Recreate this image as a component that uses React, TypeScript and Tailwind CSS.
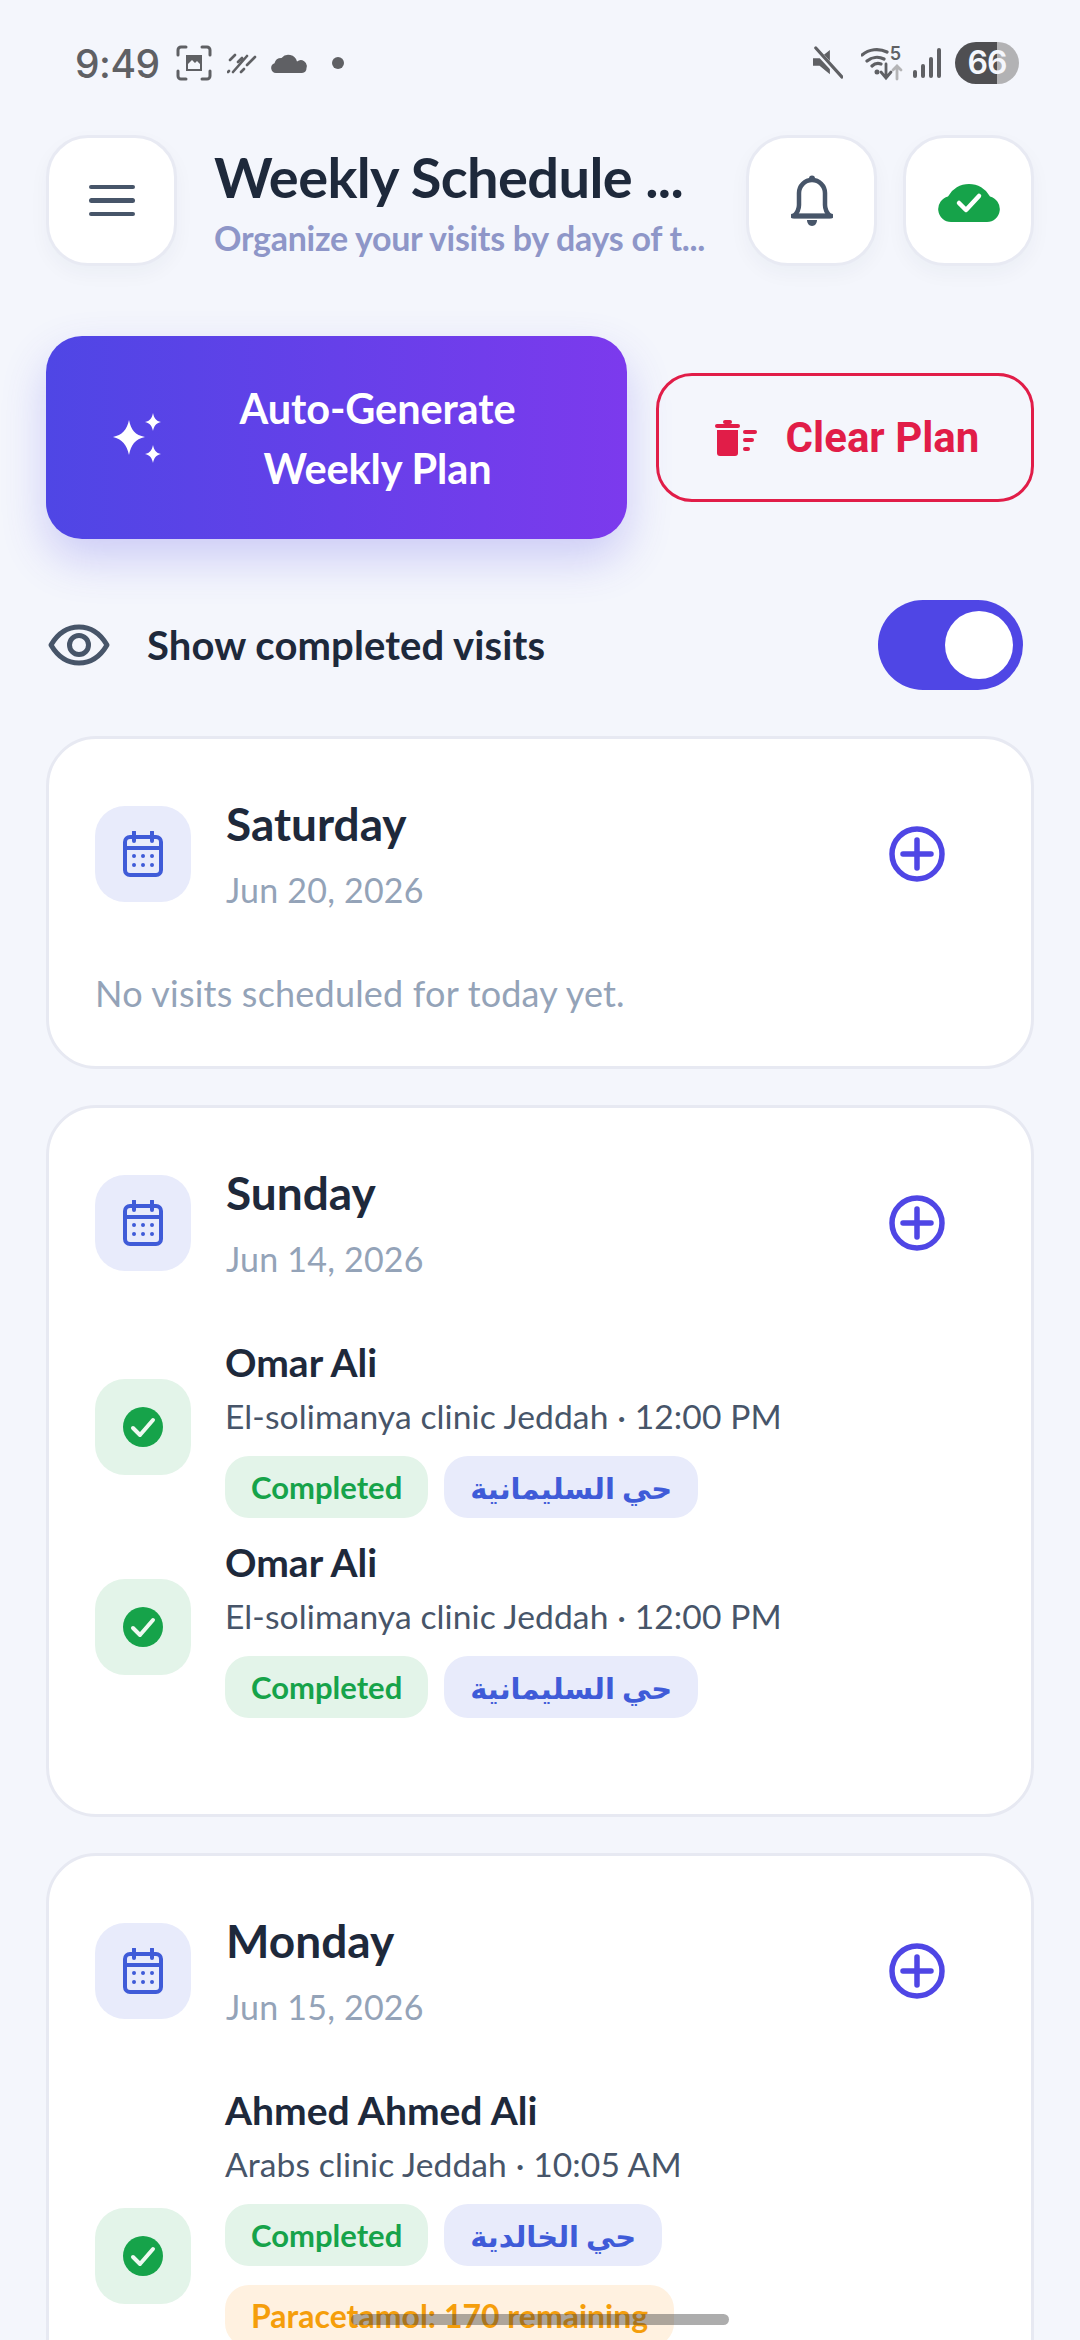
const BODY = "font-['Lato','DejaVu_Sans',sans-serif]"

function StatusBar() {
  return (
    <div className="flex h-[135px] items-start justify-between pl-[75px] pr-[61px] pt-[40px] text-[#5f6064]">
      <div className="flex h-[46px] items-center">
        <span className="font-['Inter',sans-serif] text-[39px] font-medium leading-none tracking-[-0.5px]">9:49</span>
        {/* screenshot */}
        <svg className="ml-[16px]" width="36" height="36" viewBox="0 0 36 36" fill="none" stroke="currentColor" strokeWidth="3" strokeLinecap="round">
          <path d="M2 10V5a3 3 0 0 1 3-3h5M26 2h5a3 3 0 0 1 3 3v5M34 26v5a3 3 0 0 1-3 3h-5M10 34H5a3 3 0 0 1-3-3v-5" />
          <path d="M10 10h16v16H10z" fill="currentColor" stroke="none" />
          <path d="M12 19l4-4 3 3 2-2 3 3v5H12z" fill="#f4f6fc" stroke="none" />
        </svg>
        {/* data lines */}
        <svg className="ml-[15px]" width="30" height="22" viewBox="0 0 30 22" fill="none" stroke="currentColor" strokeWidth="2.6" strokeLinecap="round">
          <path d="M3 8l5-5M1 20l1-1M6 20L20 4M14 20l3-3M20 13l8-8M11 10l4-4" />
        </svg>
        {/* cloud */}
        <svg className="ml-[14px]" width="36" height="20" viewBox="0 0 36 20" fill="currentColor">
          <path d="M5 20a5 5 0 0 1-1.500-9.700A7 7 0 0 1 10.500 5 9 9 0 0 1 26 8.500 6 6 0 0 1 35.500 15a5 5 0 0 1-4.500 5z" />
        </svg>
        <span className="ml-[25px] h-[12px] w-[12px] rounded-full bg-[#5f6064]" />
      </div>
      <div className="flex h-[46px] items-center">
        {/* muted */}
        <svg width="30" height="34" viewBox="0 0 32 34" fill="currentColor">
          <path d="M0 12h7l11-9v26l-11-9H0z" />
          <path d="M2 2l28 30" stroke="#f4f6fc" strokeWidth="6" />
          <path d="M3 1l28 31" stroke="currentColor" strokeWidth="3.4" strokeLinecap="round" />
        </svg>
        {/* wifi */}
        <svg className="ml-[18px]" width="44" height="36" viewBox="0 0 44 36" fill="none" stroke="currentColor" strokeWidth="3.200" strokeLinecap="round">
          <path d="M1 10a23 23 0 0 1 25-3M6 16a16 16 0 0 1 17-2M11 21a9 9 0 0 1 9-2" />
          <circle cx="16" cy="27" r="2.500" fill="currentColor" stroke="none" />
          <path d="M25 19v13M20 27l5 6 5-6" strokeWidth="2.800" />
          <path d="M36 34V21M32 25l4-4 4 4" stroke="#b4b4b6" strokeWidth="2.800" />
        </svg>
        <span className="-ml-[15px] -mt-[18px] font-['Inter',sans-serif] text-[18px] font-semibold leading-none">5</span>
        {/* signal */}
        <svg className="ml-[12px]" width="28" height="30" viewBox="0 0 28 30" fill="currentColor">
          <rect x="0" y="22" width="4" height="8" rx="2" />
          <rect x="8" y="16" width="4" height="14" rx="2" />
          <rect x="16" y="9" width="4" height="21" rx="2" />
          <rect x="24" y="0" width="4" height="30" rx="2" />
        </svg>
        {/* battery */}
        <div className="ml-[14px] flex h-[42px] w-[64px] items-center justify-center rounded-full bg-[linear-gradient(90deg,#4f4f52_0%,#4f4f52_65%,#b2b2b4_65%,#b2b2b4_100%)] font-['Inter',sans-serif] text-[32px] font-semibold leading-none tracking-[-1px] text-[#f4f6fc]">
          66
        </div>
      </div>
    </div>
  )
}

function IconButton({ children }: { children: React.ReactNode }) {
  return (
    <div className="flex h-[131px] w-[131px] shrink-0 items-center justify-center rounded-[42px] border-[3px] border-[#e8eaf3] bg-white shadow-[0_8px_20px_rgba(30,41,80,0.04)]">
      {children}
    </div>
  )
}

function Header() {
  return (
    <div className="flex h-[131px] items-center">
      <IconButton>
        <div className="flex flex-col gap-[9px]">
          <span className="h-[4.5px] w-[46px] rounded-full bg-[#475569]" />
          <span className="h-[4.5px] w-[46px] rounded-full bg-[#475569]" />
          <span className="h-[4.5px] w-[46px] rounded-full bg-[#475569]" />
        </div>
      </IconButton>
      <div className="ml-[37px] w-[492px] shrink-0">
        <div className="whitespace-nowrap text-[56px] font-bold leading-[68px] tracking-[-0.6px] text-[#1e293b]">Weekly Schedule ...</div>
        <div className="mt-[6px] whitespace-nowrap text-[34px] font-bold leading-[42px] tracking-[-0.3px] text-[#8e96c8]">Organize your visits by days of t...</div>
      </div>
      <div className="ml-auto flex gap-[26px]">
        <IconButton>
          <svg width="42" height="52" viewBox="0 0 42 52" fill="none" stroke="#475569" strokeWidth="4.500" strokeLinejoin="round">
            <path d="M21 5a13 13 0 0 0-13 13v12c0 5-2 8-5 11h36c-3-3-5-6-5-11V18A13 13 0 0 0 21 5z" />
            <path d="M2 41h38" strokeWidth="5" strokeLinecap="round" />
            <path d="M16 45h10c0 3-2 6-5 6s-5-3-5-6z" fill="#475569" stroke="none" />
            <circle cx="21" cy="3.500" r="3" fill="#475569" stroke="none" />
          </svg>
        </IconButton>
        <IconButton>
          <svg width="62" height="42" viewBox="0 0 62 42" fill="#16a34a">
            <path d="M13 42A13 13 0 0 1 10 16.400 A24 24 0 0 1 52 16.400 A13 13 0 0 1 49 42z" />
            <path d="M21 23l7 7 13-14" fill="none" stroke="#fff" strokeWidth="4.500" strokeLinecap="round" strokeLinejoin="round" />
          </svg>
        </IconButton>
      </div>
    </div>
  )
}

function Actions() {
  return (
    <div className="mt-[70px] flex h-[203px] items-center">
      <div className="flex h-[203px] w-[581px] shrink-0 items-center rounded-[36px] bg-[linear-gradient(90deg,#4f46e5,#7c3aed)] pl-[66px] shadow-[0_20px_45px_rgba(79,70,229,0.24)]">
        <svg width="50" height="50" viewBox="0 0 50 50" fill="#fff">
          <path d="M17 7c2 10 6 15 16 17-10 2-14 8-16 18C15 32 10 26 1 24c9-2 14-7 16-17z" />
          <path d="M41 0c1 5 3 8 8 9-5 1-7 4-8 9-1-5-3-8-8-9 5-1 7-4 8-9z" />
          <path d="M41 32c1 5 3 8 8 9-5 1-7 4-8 9-1-5-3-8-8-9 5-1 7-4 8-9z" />
        </svg>
        <div className="ml-[43px] w-[345px] text-center text-[41.5px] font-bold leading-[60px] tracking-[-0.1px] text-white">
          Auto-Generate
          <br />
          Weekly Plan
        </div>
      </div>
      <div className="ml-[29px] flex h-[129px] flex-1 items-center justify-center rounded-[36px] border-[3px] border-[#e11d48] pl-[4px] font-['Roboto',sans-serif] text-[#e11d48]">
        <svg width="44" height="36" viewBox="0 0 44 36" fill="#e11d48">
          <rect x="0" y="4" width="25" height="4" rx="2" />
          <rect x="8" y="0" width="9" height="4" rx="2" />
          <path d="M2 10h21v23a3 3 0 0 1-3 3H5a3 3 0 0 1-3-3z" />
          <rect x="28" y="10" width="14" height="4" rx="2" />
          <rect x="28" y="18" width="11" height="4" rx="2" />
          <rect x="28" y="27" width="7" height="4" rx="2" />
        </svg>
        <span className="ml-[27px] text-[42px] font-bold leading-none">Clear Plan</span>
      </div>
    </div>
  )
}

function Toggle() {
  return (
    <div className="mt-[61px] flex h-[90px] items-center pl-[2px] pr-[11px]">
      <svg width="62" height="42" viewBox="0 0 62 42" fill="none" stroke="#475569" strokeWidth="5" strokeLinejoin="round">
        <path d="M3 21C10 9 19 3 31 3s21 6 28 18c-7 12-16 18-28 18S10 33 3 21z" />
        <circle cx="31" cy="21" r="9.500" />
      </svg>
      <span className="ml-[37px] text-[40px] font-bold leading-none tracking-[0.1px] text-[#1e293b]">Show completed visits</span>
      <div className="ml-auto flex h-[90px] w-[145px] items-center justify-end rounded-full bg-[#4f46e5] pr-[10px]">
        <div className="h-[68px] w-[68px] rounded-full bg-white" />
      </div>
    </div>
  )
}

function Card({ day, date, children }: { day: string; date: string; children: React.ReactNode }) {
  return (
    <div className="rounded-[50px] border-[3px] border-[#e7e9f2] bg-white pl-[46px] pr-[86px] pt-[67px]">
      <div className="flex h-[96px] items-center">
        <div className="flex h-[96px] w-[96px] shrink-0 items-center justify-center rounded-[30px] bg-[#e8ebfb]">
          <svg width="40" height="46" viewBox="0 0 40 46" fill="none" stroke="#3f5bd8" strokeWidth="4" strokeLinecap="round">
            <rect x="2" y="6" width="36" height="38" rx="5" />
            <path d="M2 17h36M11 1v9M29 1v9" />
            <path d="M11 25h.01M20 25h.01M29 25h.01M11 34h.01M20 34h.01M29 34h.01" />
          </svg>
        </div>
        <div className="ml-[35px] mt-[1px]">
          <div className="text-[46px] font-bold leading-[50px] text-[#1e293b]">{day}</div>
          <div className="mt-[21px] text-[34px] font-normal leading-[40px] tracking-[0.2px] text-[#94a3b8]">{date}</div>
        </div>
        <svg className="ml-auto" width="56" height="56" viewBox="0 0 56 56" fill="none" stroke="#4f46e5" strokeWidth="5.500" strokeLinecap="round">
          <circle cx="28" cy="28" r="25" />
          <path d="M28 14v28M14 28h28" />
        </svg>
      </div>
      {children}
    </div>
  )
}

function Chip({ className, children }: { className: string; children: React.ReactNode }) {
  return (
    <span className={`flex h-[62px] items-center whitespace-nowrap rounded-[24px] px-[26px] leading-none ${className}`}>
      {children}
    </span>
  )
}

type Visit = { name: string; place: string; area: string; stock?: boolean }

function VisitRow({ visit }: { visit: Visit }) {
  return (
    <div className="flex items-center">
      <div className="flex h-[96px] w-[96px] shrink-0 items-center justify-center rounded-[30px] bg-[#e3f4e9]">
        <svg width="40" height="40" viewBox="0 0 40 40">
          <circle cx="20" cy="20" r="20" fill="#16a34a" />
          <path d="M10 21l7 7 13-15" fill="none" stroke="#eef9f1" strokeWidth="4" strokeLinecap="round" strokeLinejoin="round" />
        </svg>
      </div>
      <div className={`ml-[34px] ${visit.stock ? "pb-[81px]" : ""}`}>
        <div className="text-[39px] font-bold leading-[54px] text-[#1e293b]">{visit.name}</div>
        <div className="mt-[5px] whitespace-nowrap text-[33.6px] font-normal leading-[44px] tracking-[0.1px] text-[#475569]">{visit.place}</div>
        <div className="mt-[18px] flex gap-[16px]">
          <Chip className="bg-[#e3f4e9] text-[31px] font-bold text-[#16a34a]">Completed</Chip>
          <Chip className="bg-[#e8ebfb] text-[29px] font-bold text-[#3f5bd8]">{visit.area}</Chip>
        </div>
        {visit.stock && (
          <div className="mt-[19px] flex">
            <Chip className="bg-[#fff1e0] text-[32px] font-bold text-[#f59e0b]">Paracetamol: 170 remaining</Chip>
          </div>
        )}
      </div>
    </div>
  )
}

const OMAR: Visit = { name: "Omar Ali", place: "El-solimanya clinic Jeddah · 12:00 PM", area: "حي السليمانية" }

export default function App() {
  return (
    <div className={`relative h-[2340px] w-[1080px] overflow-hidden bg-[#f4f6fc] ${BODY}`}>
      <StatusBar />
      <div className="pl-[46px] pr-[46px]">
        <Header />
        <Actions />
        <Toggle />
        <div className="mt-[46px] flex flex-col gap-[36px]">
          <Card day="Saturday" date="Jun 20, 2026">
            <div className="mt-[67px] pb-[49px] text-[36px] font-normal leading-[48px] tracking-[0.2px] text-[#94a3b8]">
              No visits scheduled for today yet.
            </div>
          </Card>
          <Card day="Sunday" date="Jun 14, 2026">
            <div className="mt-[64px] flex flex-col gap-[17px] pb-[96px]">
              <VisitRow visit={OMAR} />
              <VisitRow visit={OMAR} />
            </div>
          </Card>
          <Card day="Monday" date="Jun 15, 2026">
            <div className="mt-[64px]">
              <VisitRow visit={{ name: "Ahmed Ahmed Ali", place: "Arabs clinic Jeddah · 10:05 AM", area: "حي الخالدية", stock: true }} />
            </div>
          </Card>
        </div>
      </div>
      {/* home indicator */}
      <div className="absolute left-[351px] top-[2314px] h-[11px] w-[378px] rounded-full bg-[rgba(60,60,60,0.42)]" />
    </div>
  )
}
